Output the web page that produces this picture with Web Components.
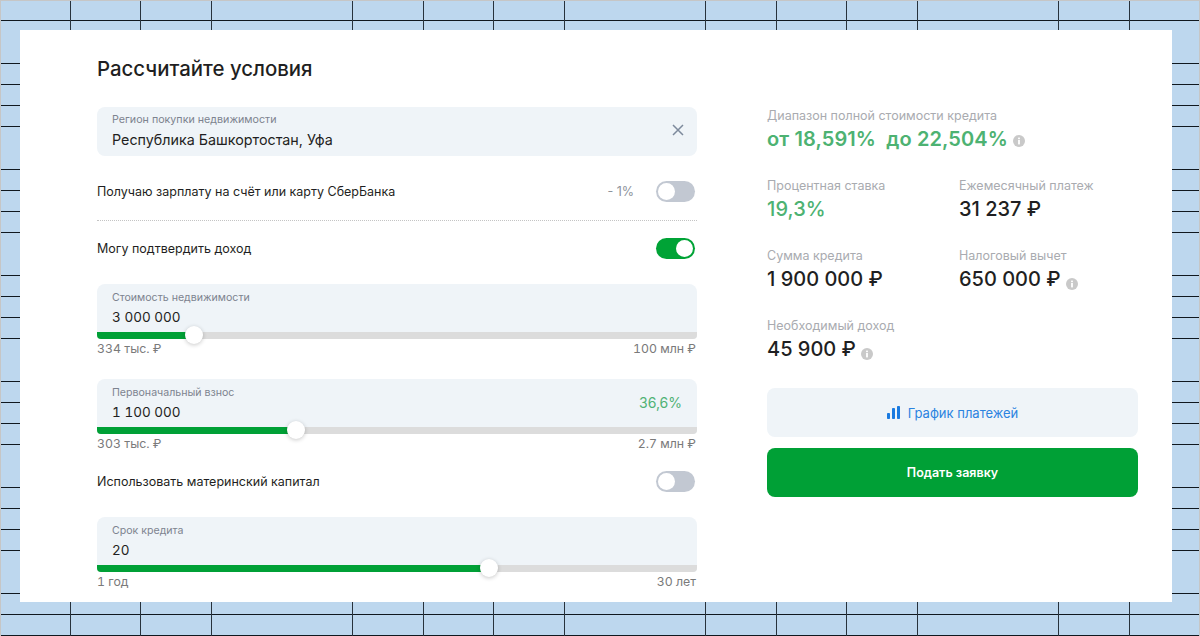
<!DOCTYPE html>
<html lang="ru">
<head>
<meta charset="utf-8">
<title>Рассчитайте условия</title>
<style>
  html, body { margin: 0; padding: 0; }
  body { font-family: Inter, "Noto Sans", sans-serif; color: #1f1f22; }
</style>
</head>
<body>
<sheet-backdrop>
  <calc-card heading="Рассчитайте условия">
    <region-field slot="left" label="Регион покупки недвижимости" value="Республика Башкортостан, Уфа"></region-field>
    <toggle-row slot="left" label="Получаю зарплату на счёт или карту СберБанка" note="- 1%" style="margin-top:25px"></toggle-row>
    <dotted-rule slot="left"></dotted-rule>
    <toggle-row slot="left" label="Могу подтвердить доход" on style="margin-top:17px"></toggle-row>
    <range-field slot="left" label="Стоимость недвижимости" value="3 000 000" min="334 тыс. ₽" max="100 млн ₽" percent="16.2" style="margin-top:25px"></range-field>
    <range-field slot="left" label="Первоначальный взнос" value="1 100 000" extra="36,6%" min="303 тыс. ₽" max="2.7 млн ₽" percent="33.2" style="margin-top:22px"></range-field>
    <toggle-row slot="left" label="Использовать материнский капитал" style="margin-top:19px"></toggle-row>
    <range-field slot="left" label="Срок кредита" value="20" min="1 год" max="30 лет" percent="65.3" style="margin-top:25px"></range-field>

    <stat-item slot="right" wide green label="Диапазон полной стоимости кредита" value="от 18,591%&nbsp; до 22,504%" info strong></stat-item>
    <stat-item slot="right" green label="Процентная ставка" value="19,3%"></stat-item>
    <stat-item slot="right" label="Ежемесячный платеж" value="31 237 ₽"></stat-item>
    <stat-item slot="right" label="Сумма кредита" value="1 900 000 ₽"></stat-item>
    <stat-item slot="right" label="Налоговый вычет" value="650 000 ₽" info></stat-item>
    <stat-item slot="right" wide label="Необходимый доход" value="45 900 ₽" info></stat-item>

    <action-button slot="actions" kind="light" icon>График платежей</action-button>
    <action-button slot="actions" kind="primary">Подать заявку</action-button>
  </calc-card>
</sheet-backdrop>

<script>
// Spreadsheet background behind the card
class SheetBackdrop extends HTMLElement {
  constructor() {
    super();
    this.attachShadow({ mode: "open" });
  }

  connectedCallback() {
    this.shadowRoot.innerHTML = `
      <style>
        :host {
          display: block;
          box-sizing: border-box;
          width: 1200px;
          height: 636px;
          padding: 30px 28px 34px 20px;
          background-color: #bdd7ee;
          background-image:
            repeating-linear-gradient(90deg, transparent 0, transparent 69.8px, #27323c 69.8px, #27323c 70.6px),
            repeating-linear-gradient(180deg, transparent 0, transparent 20.4px, #10181f 20.4px, #10181f 21.2px);
          box-shadow: inset 1px 1px 0 #c6c6c6, inset -1px 0 0 #c6c6c6;
          overflow: hidden;
        }
      </style>
      <slot></slot>
    `;
  }
}

// White card with two columns
class CalcCard extends HTMLElement {
  constructor() {
    super();
    this.attachShadow({ mode: "open" });
  }

  connectedCallback() {
    const heading = this.getAttribute("heading");

    this.shadowRoot.innerHTML = `
      <style>
        :host {
          display: flex;
          box-sizing: border-box;
          width: 1152px;
          height: 572px;
          padding: 27px 34px 0 77px;
          gap: 70px;
          background: #fff;
        }
        .left {
          width: 600px;
          flex: none;
        }
        h1 {
          margin: 0 0 26px;
          font: 500 20.4px/24px Inter, "Noto Sans", sans-serif;
          color: #1f1f22;
        }
        .right {
          width: 371px;
          flex: none;
          padding-top: 51px;
        }
        .stats {
          display: grid;
          grid-template-columns: 192px 1fr;
          row-gap: 23px;
        }
        .actions {
          display: flex;
          flex-direction: column;
          gap: 11px;
          margin-top: 23px;
        }
      </style>
      <div class="left">
        <h1>${heading}</h1>
        <slot name="left"></slot>
      </div>
      <div class="right">
        <div class="stats"><slot name="right"></slot></div>
        <div class="actions"><slot name="actions"></slot></div>
      </div>
    `;
  }
}

// Region input with a clear cross
class RegionField extends HTMLElement {
  constructor() {
    super();
    this.attachShadow({ mode: "open" });
  }

  connectedCallback() {
    this.shadowRoot.innerHTML = `
      <style>
        :host {
          display: flex;
          align-items: center;
          justify-content: space-between;
          box-sizing: border-box;
          height: 49px;
          padding: 0 12px 2px 15px;
          border-radius: 8px;
          background: #eff4f8;
        }
        .label {
          font-size: 10.7px;
          line-height: 14px;
          color: #7d838f;
        }
        .value {
          margin-top: 4px;
          font-size: 14.3px;
          line-height: 18px;
          color: #1f1f22;
        }
        svg {
          display: block;
          margin-top: -2px;
        }
      </style>
      <div>
        <div class="label">${this.getAttribute("label")}</div>
        <div class="value">${this.getAttribute("value")}</div>
      </div>
      <svg width="14" height="14" viewBox="0 0 14 14" fill="none" stroke="#7d8a9c" stroke-width="1.5">
        <path d="M2 2l10 10M12 2L2 12"/>
      </svg>
    `;
  }
}

// Text line with a switch on the right
class ToggleRow extends HTMLElement {
  constructor() {
    super();
    this.attachShadow({ mode: "open" });
  }

  connectedCallback() {
    const on = this.hasAttribute("on");
    const note = this.getAttribute("note");

    this.shadowRoot.innerHTML = `
      <style>
        :host {
          display: flex;
          align-items: center;
          height: 21px;
          padding-right: 2px;
          font-size: 12.5px;
          color: #1f1f22;
        }
        .label {
          flex: 1;
        }
        .note {
          margin-right: 22px;
          font-size: 12.5px;
          color: #8d939c;
        }
        .switch {
          box-sizing: border-box;
          display: flex;
          justify-content: ${on ? "flex-end" : "flex-start"};
          align-items: center;
          width: 39px;
          height: 21px;
          padding: 2px;
          border-radius: 11px;
          background: ${on ? "#00a336" : "#c2c8d2"};
        }
        .switch i {
          display: block;
          width: 17px;
          height: 17px;
          border-radius: 50%;
          background: #fff;
        }
      </style>
      <div class="label">${this.getAttribute("label")}</div>
      ${note ? `<div class="note">${note}</div>` : ""}
      <div class="switch"><i></i></div>
    `;
  }
}

class DottedRule extends HTMLElement {
  constructor() {
    super();
    this.attachShadow({ mode: "open" });
  }

  connectedCallback() {
    this.shadowRoot.innerHTML = `
      <style>
        :host {
          display: block;
          margin-top: 18px;
          border-top: 1px dotted #c4c4c4;
        }
      </style>
    `;
  }
}

// Input box with slider track and min/max captions
class RangeField extends HTMLElement {
  constructor() {
    super();
    this.attachShadow({ mode: "open" });
  }

  connectedCallback() {
    const percent = this.getAttribute("percent");
    const extra = this.getAttribute("extra");

    this.shadowRoot.innerHTML = `
      <style>
        :host {
          display: block;
        }
        .box {
          position: relative;
          height: 55px;
          box-sizing: border-box;
          padding: 7px 15px 0;
          border-radius: 8px 8px 4px 4px;
          background: #eff4f8;
        }
        .label {
          font-size: 10.6px;
          line-height: 14px;
          color: #7d838f;
        }
        .value {
          margin-top: 3px;
          font-size: 13.5px;
          line-height: 18px;
          font-variant-numeric: tabular-nums;
          color: #1f1f22;
        }
        .extra {
          position: absolute;
          top: 15px;
          right: 15px;
          font-size: 14px;
          line-height: 18px;
          color: #4fb275;
        }
        .track {
          position: absolute;
          left: 0;
          right: 0;
          bottom: 0;
          height: 7px;
          overflow: hidden;
          border-radius: 0 0 4px 4px;
          background: #dcdcdc;
        }
        .fill {
          width: ${percent}%;
          height: 100%;
          background: #00a036;
        }
        .knob {
          position: absolute;
          left: ${percent}%;
          bottom: -5px;
          width: 18px;
          height: 18px;
          margin-left: -9px;
          border-radius: 50%;
          background: #fff;
          box-shadow: 0 1px 4px rgba(0, 0, 0, .22);
        }
        .caps {
          display: flex;
          justify-content: space-between;
          height: 16px;
          margin-top: 2px;
          padding-right: 1px;
          font-size: 12.3px;
          line-height: 16px;
          font-variant-numeric: tabular-nums;
          color: #7a7a7a;
        }
      </style>
      <div class="box">
        <div class="label">${this.getAttribute("label")}</div>
        <div class="value">${this.getAttribute("value")}</div>
        ${extra ? `<div class="extra">${extra}</div>` : ""}
        <div class="track"><div class="fill"></div></div>
        <div class="knob"></div>
      </div>
      <div class="caps">
        <span>${this.getAttribute("min")}</span>
        <span>${this.getAttribute("max")}</span>
      </div>
    `;
  }
}

// Caption and big number in the result column
class StatItem extends HTMLElement {
  constructor() {
    super();
    this.attachShadow({ mode: "open" });
  }

  connectedCallback() {
    const green = this.hasAttribute("green");
    const strong = this.hasAttribute("strong");
    const info = this.hasAttribute("info");

    this.shadowRoot.innerHTML = `
      <style>
        :host {
          display: block;
          height: 47px;
          ${this.hasAttribute("wide") ? "grid-column: 1 / -1;" : ""}
        }
        .label {
          font-size: 12.5px;
          line-height: 16px;
          color: #a9abb0;
        }
        .value {
          display: flex;
          align-items: center;
          height: 28px;
          margin-top: 1px;
          font-size: 20px;
          letter-spacing: ${green ? 0.1 : 0}px;
          font-weight: ${strong ? 600 : 500};
          color: ${green ? "#4db272" : "#1f1f22"};
          white-space: nowrap;
        }
        svg {
          display: block;
          margin: ${strong ? 4 : 9}px 0 0 5px;
        }
      </style>
      <div class="label">${this.getAttribute("label")}</div>
      <div class="value">
        <span>${this.getAttribute("value")}</span>
        ${info ? `<svg width="12" height="12" viewBox="0 0 12 12"><circle cx="6" cy="6" r="6" fill="#c9c9c9"/><rect x="5.1" y="5" width="1.8" height="4.4" fill="#fff"/><rect x="5.1" y="2.6" width="1.8" height="1.6" fill="#fff"/></svg>` : ""}
      </div>
    `;
  }
}

// Light and green buttons
class ActionButton extends HTMLElement {
  constructor() {
    super();
    this.attachShadow({ mode: "open" });
  }

  connectedCallback() {
    const primary = this.getAttribute("kind") === "primary";

    this.shadowRoot.innerHTML = `
      <style>
        :host {
          display: flex;
          align-items: center;
          justify-content: center;
          gap: 8px;
          height: 49px;
          border-radius: 8px;
          font-size: ${primary ? 12.5 : 13}px;
          font-weight: ${primary ? 600 : 400};
          color: ${primary ? "#fff" : "#2b83e0"};
          background: ${primary ? "#00a036" : "#eff4f8"};
        }
        svg {
          display: block;
        }
      </style>
      ${this.hasAttribute("icon") ? `<svg width="13" height="13" viewBox="0 0 13 13" fill="#1a7ae0"><rect x="0" y="7" width="3" height="6" rx=".8"/><rect x="5" y="2" width="3" height="11" rx=".8"/><rect x="10" y="0" width="3" height="13" rx=".8"/></svg>` : ""}
      <slot></slot>
    `;
  }
}

// Register custom elements
customElements.define("sheet-backdrop", SheetBackdrop);
customElements.define("calc-card", CalcCard);
customElements.define("region-field", RegionField);
customElements.define("toggle-row", ToggleRow);
customElements.define("dotted-rule", DottedRule);
customElements.define("range-field", RangeField);
customElements.define("stat-item", StatItem);
customElements.define("action-button", ActionButton);
</script>
</body>
</html>
